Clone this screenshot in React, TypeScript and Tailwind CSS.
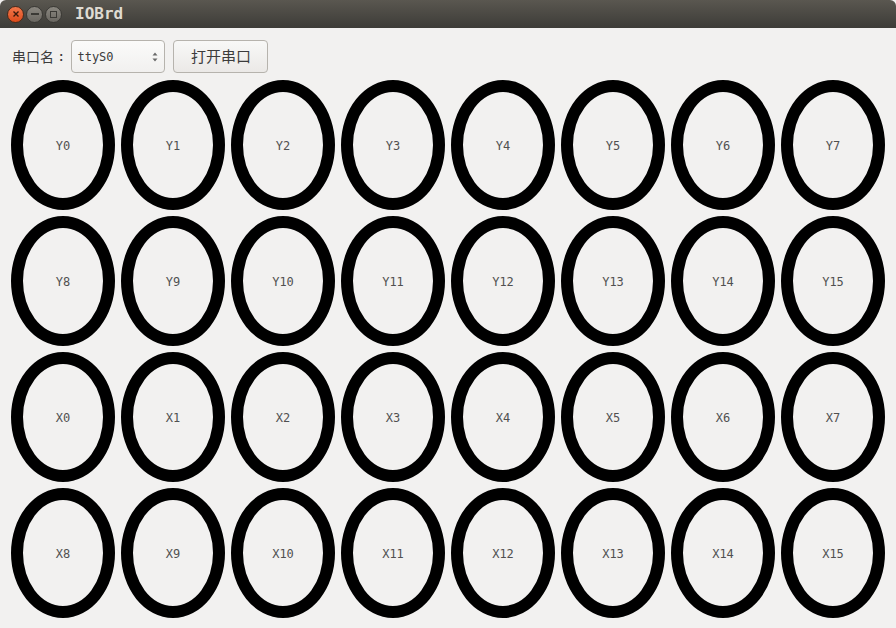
import React from "react";

const rows = [
  ["Y0", "Y1", "Y2", "Y3", "Y4", "Y5", "Y6", "Y7"],
  ["Y8", "Y9", "Y10", "Y11", "Y12", "Y13", "Y14", "Y15"],
  ["X0", "X1", "X2", "X3", "X4", "X5", "X6", "X7"],
  ["X8", "X9", "X10", "X11", "X12", "X13", "X14", "X15"],
];

const mono = { fontFamily: '"DejaVu Sans Mono", "Liberation Mono", monospace' };

function Lamp({ name }: { name: string }) {
  return (
    <div className="w-[104px] h-[130px] rounded-[50%] border-[12px] border-black flex items-center justify-center">
      <span className="text-[12px] text-[#505050] mt-[1px]" style={mono}>
        {name}
      </span>
    </div>
  );
}

export default function App() {
  return (
    <div className="w-[896px] h-[628px] bg-[#f2f1f0] flex flex-col overflow-hidden" style={{ fontFamily: '"Noto Sans CJK SC", "Noto Sans", sans-serif' }}>
      {/* title bar */}
      <div className="h-[28px] bg-gradient-to-b from-[#5a5750] to-[#3d3c38] rounded-tl-[6px] rounded-tr-[6px] flex items-center pl-[7px] shrink-0">
        <div className="w-[17px] h-[17px] rounded-full bg-gradient-to-b from-[#f2774a] to-[#dd4a18] border border-[#4a2a1a] flex items-center justify-center">
          <svg width="8" height="8" viewBox="0 0 8 8">
            <path d="M1.5 1.5 L6.5 6.5 M6.5 1.5 L1.5 6.5" stroke="#3a1a0c" strokeWidth="1.4" />
          </svg>
        </div>
        <div className="ml-[2px] w-[17px] h-[17px] rounded-full bg-gradient-to-b from-[#8a8780] to-[#6a6761] border border-[#3a3935] flex items-center justify-center">
          <div className="w-[8px] h-[2px] bg-[#3a3935]" />
        </div>
        <div className="ml-[2px] w-[17px] h-[17px] rounded-full bg-gradient-to-b from-[#8a8780] to-[#6a6761] border border-[#3a3935] flex items-center justify-center">
          <div className="w-[7px] h-[7px] border-[1.5px] border-[#3a3935]" />
        </div>
        <span className="ml-[13px] text-[16px] font-bold text-[#dfdbd2]" style={mono}>
          IOBrd
        </span>
      </div>

      {/* toolbar */}
      <div className="flex items-center mt-[12px] pl-[12px] h-[33px] shrink-0">
        <span className="text-[14px] text-[#3c3c3c]">串口名</span>
        <span className="text-[14px] text-[#3c3c3c] ml-[3px]" style={mono}>:</span>
        <div className="ml-[6px] w-[94px] h-[33px] rounded-[4px] border border-[#b6b3ad] bg-gradient-to-b from-[#fbfbfa] to-[#f1f0ef] flex items-center pl-[5px] pr-[6px]">
          <span className="text-[12px] text-[#3c3c3c] flex-1" style={mono}>
            ttyS0
          </span>
          <svg width="6" height="12" viewBox="0 0 6 12">
            <path d="M0.5 4.5 L3 1.5 L5.5 4.5 Z M0.5 7.5 L3 10.5 L5.5 7.5 Z" fill="#6a6a6a" />
          </svg>
        </div>
        <button className="ml-[8px] w-[95px] h-[33px] rounded-[4px] border border-[#b6b3ad] bg-gradient-to-b from-[#f8f8f7] to-[#ebe9e7] text-[15px] text-[#3c3c3c]">
          打开串口
        </button>
      </div>

      {/* lamps */}
      <div className="flex flex-col gap-[6px] mt-[7px] pl-[11px]">
        {rows.map((r, i) => (
          <div key={i} className="flex gap-[6px]">
            {r.map((n) => (
              <Lamp key={n} name={n} />
            ))}
          </div>
        ))}
      </div>
    </div>
  );
}
